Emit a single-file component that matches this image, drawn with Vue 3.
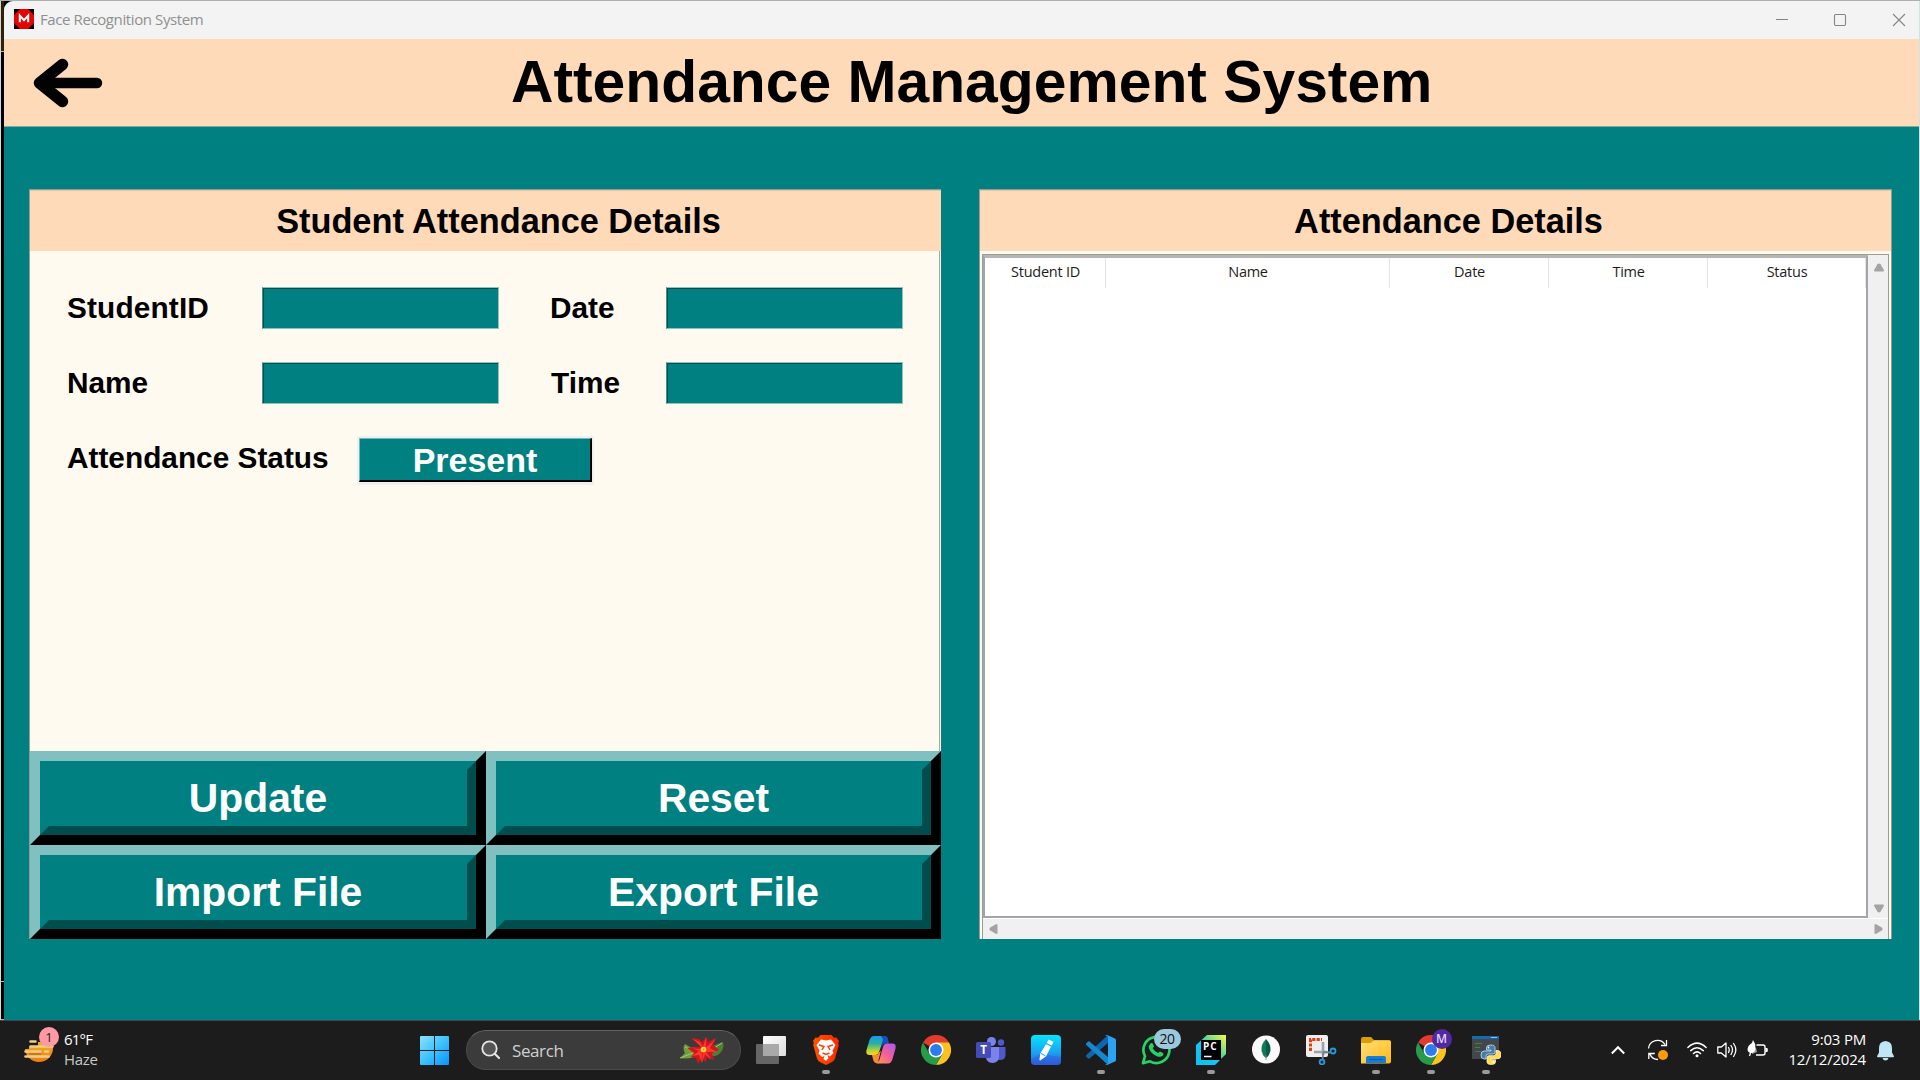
<script setup>
const columns = [
  { label: 'Student ID', width: 121 },
  { label: 'Name', width: 284 },
  { label: 'Date', width: 159 },
  { label: 'Time', width: 159 },
  { label: 'Status', width: 158 },
]
const actions = ['Update', 'Reset', 'Import File', 'Export File']
</script>

<template>
  <div class="screen">
    <div class="desktop">
      <div class="behind"><i class="b1"></i><i class="b2"></i><i class="b3"></i></div>
      <div class="window">
        <div class="titlebar">
          <svg class="app-icon" width="20" height="20" viewBox="0 0 20 20">
            <rect width="20" height="20" fill="#0a0000" />
            <path d="M6 0h8l6 6v8l-6 6H6l-6-6V6z" fill="#e30505" />
            <path d="M5.800 13.300V6.600l4.200 4.600 4.200-4.600v6.700" fill="none" stroke="#fff" stroke-width="2" />
          </svg>
          <span class="title">Face Recognition System</span>
          <svg class="controls" width="130" height="14" viewBox="0 0 130 14" fill="none" stroke="#858585" stroke-width="1.100">
            <path d="M0 6.500h12" />
            <rect x="58.500" y="1.500" width="11" height="11" rx="1.200" />
            <path d="M117 1l12 12M129 1l-12 12" />
          </svg>
        </div>
        <header class="banner">
          <svg class="back" width="72" height="52" viewBox="0 0 72 52" fill="none" stroke="#020202" stroke-linecap="round" stroke-linejoin="round">
            <path d="M30.500 7.500L7.500 26l23 18.500" stroke-width="11.500" />
            <path d="M8 26h57" stroke-width="10.400" />
            <path d="M7 26l14-9v18z" fill="#020202" stroke-width="4" />
          </svg>
          <h1>Attendance Management System</h1>
        </header>
        <main class="content">
          <section class="panel left">
            <h2>Student Attendance Details</h2>
            <div class="form">
              <div class="row">
                <label class="c1 sid">StudentID</label><div class="field"></div>
                <label class="c2">Date</label><div class="field"></div>
              </div>
              <div class="row">
                <label class="c1">Name</label><div class="field"></div>
                <label class="c2 time">Time</label><div class="field"></div>
              </div>
              <div class="row">
                <label class="c3">Attendance Status</label>
                <button class="status"><span>Present</span></button>
              </div>
            </div>
            <div class="actions">
              <button v-for="a in actions" :key="a" class="action"><span>{{ a }}</span></button>
            </div>
          </section>
          <section class="panel right">
            <h2>Attendance Details</h2>
            <div class="table-wrap">
              <div class="table">
                <div class="thead">
                  <div v-for="c in columns" :key="c.label" class="th" :style="{ width: c.width + 'px' }">{{ c.label }}</div>
                </div>
              </div>
              <div class="vscroll">
                <svg width="12" height="9" viewBox="0 0 12 9"><path d="M4.500 1.200Q6-.4 7.500 1.200L11 7.200Q11 8.500 10 8.500H2Q1 8.500 1 7.200z" fill="#a3a3a3" /></svg>
                <svg width="12" height="9" viewBox="0 0 12 9"><path d="M4.500 7.800Q6 9.400 7.500 7.800L11 1.800Q11 .5 10 .5H2Q1 .5 1 1.800z" fill="#a3a3a3" /></svg>
              </div>
              <div class="hscroll">
                <svg width="9" height="12" viewBox="0 0 9 12"><path d="M1.200 4.500Q-.4 6 1.200 7.500L7.200 11Q8.500 11 8.500 10V2Q8.500 1 7.200 1z" fill="#a3a3a3" /></svg>
                <svg width="9" height="12" viewBox="0 0 9 12"><path d="M7.800 4.500Q9.400 6 7.800 7.500L1.800 11Q.5 11 .5 10V2Q.5 1 1.800 1z" fill="#a3a3a3" /></svg>
              </div>
            </div>
          </section>
        </main>
      </div>
      <div class="edge"></div>
    </div>

    <footer class="taskbar">
      <div class="weather">
        <div class="wicon">
          <svg width="32" height="30" viewBox="0 0 32 30">
            <defs><linearGradient id="sun" x1="0" y1="0" x2="0" y2="1"><stop offset="0" stop-color="#fbc02d" /><stop offset="1" stop-color="#ee7a1a" /></linearGradient></defs>
            <circle cx="15" cy="14" r="14" fill="url(#sun)" />
            <path d="M0 0h32v14H29V8H0zM0 8h5v7H0z" fill="#1c1c1c" />
            <path d="M5 8h9v5H5z" fill="#1c1c1c" />
            <path d="M6.500 7.500h5M6.500 12.500h22M1.500 17.500h15M21 17.500h3M1.500 22.500h23" stroke="#ecd081" stroke-width="2.600" stroke-linecap="round" />
            <path d="M5 20h12" stroke="#1c1c1c" stroke-width="1.200" opacity=".3" />
          </svg>
          <span class="alert">1</span>
        </div>
        <div class="wtext"><span>61°F</span><span class="dim">Haze</span></div>
      </div>

      <svg class="start" width="29" height="29" viewBox="0 0 29 29">
        <defs><linearGradient id="win" x1="0" y1="0" x2="1" y2="1"><stop offset="0" stop-color="#8be2ff" /><stop offset=".5" stop-color="#3cc2ff" /><stop offset="1" stop-color="#0a93fa" /></linearGradient></defs>
        <path d="M1 0h13v14H0V1q0-1 1-1zM15 0h13q1 0 1 1v13H15zM0 15h14v14H1q-1 0-1-1zM15 15h14v13q0 1-1 1H15z" fill="url(#win)" />
      </svg>

      <div class="search">
        <svg width="20" height="20" viewBox="0 0 20 20" fill="#555" stroke="#e6e6e6" stroke-linecap="round"><circle cx="8.500" cy="8.500" r="7.200" stroke-width="1.800" /><path d="M14 14l4 4" stroke-width="2.200" /></svg>
        <span>Search</span>
        <svg class="flower" width="46" height="30" viewBox="0 0 46 30">
          <path d="M16 15L6 9Q3 13 6 18L1 23Q12 25 20 19z" fill="#6d9f3e" />
          <path d="M1 23L19 16M6 12l10 5" stroke="#b6d37b" stroke-width=".8" />
          <path d="M28 13L44 7Q46 15 39 20Q33 23 27 18z" fill="#4f7f32" />
          <path d="M29 17L43 8" stroke="#a9c978" stroke-width="1" />
          <path d="M22 12L12 3l8 1 3 3 5-5 1 5 8-4-3 7 6 5-7 3 2 7-7-3-1 5-4-4-4 6-2-6-5-1 3-4-7-5 8-1z" fill="#d3141b" />
          <path d="M24 14L14 4l7 3 3 5 3-10 0 10 9-8-5 9 7 4-10 0 4 8-6-6-3 9-3-8-7 1 7-5-9-4z" fill="#fb372f" />
          <path d="M24 14l-8-8M24 14l10-8M24 14l8 8M24 14l-1 12M24 14l-11-1" stroke="#c90f18" stroke-width=".6" />
          <circle cx="24.500" cy="14.500" r="2.800" fill="#f3d33b" /><circle cx="24.500" cy="14.500" r="1" fill="#a8a326" />
        </svg>
      </div>

      <nav class="apps">
        <div class="app">
          <svg width="30" height="30" viewBox="0 0 30 30">
            <defs><linearGradient id="tv" x1="0" y1="0" x2="1" y2="1"><stop offset="0" stop-color="#fff" /><stop offset="1" stop-color="#dcdcdc" /></linearGradient></defs>
            <rect x="7" y="1" width="23" height="20" rx="1" fill="url(#tv)" />
            <rect x="0" y="9" width="23" height="20" rx="1" fill="#666" />
            <path d="M7 9h16v12H7z" fill="#a9a9a9" />
          </svg>
        </div>
        <div class="app run">
          <svg width="30" height="30" viewBox="0 0 30 30">
            <defs><linearGradient id="br"><stop offset="0" stop-color="#ff5500" /><stop offset="1" stop-color="#ff2500" /></linearGradient></defs>
            <path d="M9.500 0h11l2.500 2.700 2.500-.2 2.500 3.500-.8 2 .6 2L24 23.500q-1 2.500-3 3.500l-6 3-6-3q-2-1-3-3.500L2.200 10l.6-2L2 6l2.500-3.500 2.500.2z" fill="url(#br)" />
            <path d="M10 4.500l5 1 5-1 4.500 5.500-3 5.500 1 2.500-3.500 3.500-2.500-1.500 1 3L15 26l-2.500-2 1-3L11 22l-3.500-3.500 1-3L5.500 10z" fill="#fff" />
            <path d="M8 10l5 1.500-2 3.500M22 10l-5 1.500 2 3.500M11.500 18l3.500 1.500 3.500-1.500" fill="none" stroke="#fb4309" stroke-width="1.500" />
          </svg>
        </div>
        <div class="app">
          <svg width="30" height="30" viewBox="0 0 30 30">
            <defs>
              <linearGradient id="cp1" x1="0" y1="0" x2="0" y2="1"><stop offset="0" stop-color="#189af3" /><stop offset=".4" stop-color="#27b0a0" /><stop offset=".8" stop-color="#c5d628" /><stop offset="1" stop-color="#ffcf20" /></linearGradient>
              <linearGradient id="cp2" x1="1" y1="0" x2="0" y2="1"><stop offset="0" stop-color="#a45cf0" /><stop offset=".5" stop-color="#f45d9c" /><stop offset="1" stop-color="#ff9d45" /></linearGradient>
            </defs>
            <path d="M8 1h13q-2.500 0-3.500 4L13 17q-1 3-4 3H3.500Q-.5 20 .5 15L3.500 5Q5 1 8 1z" fill="url(#cp1)" />
            <path d="M15 1h4q2.500 0 3 3l1 4.500h-3q-3 0-4 3l-1.500 1 2.500-8z" fill="#164fc0" />
            <path d="M22 28.500H10q2.500 0 3.500-4L17 12q1-3.500 4-3.500h5.500q4 0 3 5L26.500 24q-1.500 4.500-4.500 4.500z" fill="url(#cp2)" />
            <path d="M13 28.300h-2q-3 0-4-4L6 20h3.500q2.500 0 3.500-2.500l2-2-2.500 9.500z" fill="#f98a3c" />
          </svg>
        </div>
        <div class="app">
          <svg width="30" height="30" viewBox="0 0 48 48">
            <symbol id="chrome" viewBox="0 0 48 48">
              <path d="M24 24L3.200 12A24 24 0 0 1 44.800 12z" fill="#e33b2e" />
              <path d="M24 12h20.800A24 24 0 0 1 24 48l10.400-18z" fill="#fcc31e" />
              <path d="M13.600 30L3.200 12A24 24 0 0 0 24 48l10.400-18z" fill="#269b48" />
              <circle cx="24" cy="24" r="12" fill="#fff" /><circle cx="24" cy="24" r="9.500" fill="#2b7cf0" />
            </symbol>
            <use href="#chrome" width="48" height="48" />
          </svg>
        </div>
        <div class="app">
          <svg width="30" height="30" viewBox="0 0 30 30">
            <circle cx="25" cy="7.500" r="3.200" fill="#5059c9" /><path d="M20 12h9.500v7.500Q29.500 25 24 25h-4z" fill="#5059c9" />
            <circle cx="15.500" cy="6.500" r="4.500" fill="#7b83eb" /><path d="M10 12h13v9.500q0 6.500-6.500 6.500T10 21.500z" fill="#7b83eb" />
            <rect y="7" width="15" height="16" rx="1.500" fill="#444cb6" />
            <text x="7.500" y="19.300" fill="#fff" text-anchor="middle" font-family="Open Sans, sans-serif" font-weight="700" font-size="11.500">T</text>
          </svg>
        </div>
        <div class="app">
          <svg width="30" height="30" viewBox="0 0 30 30">
            <defs><linearGradient id="pen" x1="0" y1="0" x2="0" y2="1"><stop offset="0" stop-color="#05e4fb" /><stop offset=".6" stop-color="#1aa1f2" /><stop offset="1" stop-color="#3355d8" /></linearGradient></defs>
            <rect width="30" height="30" rx="4" fill="url(#pen)" /><path d="M0 24l10-5 20 3v5q0 3-3 3H4q-4 0-4-4z" fill="#2f5edb" opacity=".45" />
            <path d="M17.500 4.500l5 2.300-1.800 3.600-5-2.300zM15 9.300l5 2.300-4.800 9.600-6 4.300-.8-.4.900-6.600z" fill="#fff" />
            <path d="M10 18.500l4.500 2.300" stroke="#259fec" stroke-width="1" />
          </svg>
        </div>
        <div class="app run">
          <svg width="30" height="30" viewBox="0 0 30 30">
            <path d="M22 0v8L3.500 23.500Q2.500 24 1.500 23L.3 21.800q-.8-1 0-1.800z" fill="#0c66b0" />
            <path d="M22 30v-8L3.500 6.500Q2.500 6 1.500 7L.3 8.200q-.8 1 0 1.800z" fill="#1587ce" />
            <path d="M21 0l8 3.500q1 .5 1 1.500v20q0 1-1 1.500L21 30q-1 0-2-1 2 .5 3-.8V1.800Q21 .5 19 1q1-1 2-1z" fill="#2ba3f3" />
          </svg>
        </div>
        <div class="app">
          <svg width="30" height="30" viewBox="0 0 30 30">
            <path d="M2 28.200l2-7A13 13 0 1 1 9 26.300z" fill="none" stroke="#25d366" stroke-width="2.700" stroke-linejoin="round" />
            <path d="M9.700 8.300q1.500-1 2.300.8l1 2.300-1.300 1.900q2 3.500 5.400 4.800l1.800-1.700 3.100 1.500q1 .8-.2 2.500-2 2.300-5.400 1Q10 19 8 13.500q-.7-3.200 1.700-5.200z" fill="#25d366" />
          </svg>
          <span class="badge count">20</span>
        </div>
        <div class="app run">
          <svg width="30" height="30" viewBox="0 0 30 30">
            <defs><linearGradient id="pc" x1="0" y1="1" x2="1" y2="0"><stop offset="0" stop-color="#07c3f2" /><stop offset=".42" stop-color="#12c6ef" /><stop offset=".62" stop-color="#63d98f" /><stop offset="1" stop-color="#fcf84a" /></linearGradient></defs>
            <path d="M11 0h19v19L19 30H0V10z" fill="url(#pc)" /><rect x="5" y="5" width="20" height="20" fill="#000" />
            <text x="7" y="15" fill="#fff" font-family="Open Sans, sans-serif" font-weight="700" font-size="10" textLength="13.500">PC</text>
            <path d="M8 21.500h7.500" stroke="#fff" stroke-width="1.500" />
          </svg>
        </div>
        <div class="app">
          <svg width="30" height="30" viewBox="0 0 30 30">
            <circle cx="15" cy="14.500" r="14" fill="#fafafa" /><path d="M15 4q5 5.500 4.500 11-.5 5-4.500 8z" fill="#0a5b43" /><path d="M15 4q-5 5.500-4.500 11 .5 5 4.500 8z" fill="#0f7a55" /><path d="M15 20v5" stroke="#888" stroke-width=".8" />
          </svg>
        </div>
        <div class="app">
          <svg width="32" height="30" viewBox="0 0 32 30">
            <rect x="1" width="22" height="22" rx="2" fill="#eeeef1" />
            <path d="M5.500 16V4.500H17" fill="none" stroke="#d8420c" stroke-width="3" stroke-dasharray="3.200 1.200" />
            <path d="M18 7v13M9 17h13" stroke="#9da2aa" stroke-width="2.600" />
            <path d="M18 17l7.500.5M18.500 17l-1 7.500" stroke="#777f89" stroke-width="1.800" />
            <circle cx="28" cy="16" r="2.500" fill="none" stroke="#2499dd" stroke-width="1.800" /><circle cx="17" cy="27" r="2.400" fill="none" stroke="#2499dd" stroke-width="1.800" />
          </svg>
        </div>
        <div class="app run">
          <svg width="30" height="30" viewBox="0 0 30 30">
            <defs><linearGradient id="fo" x1="0" y1="0" x2="1" y2="1"><stop offset="0" stop-color="#ffdf7a" /><stop offset="1" stop-color="#ffb915" /></linearGradient></defs>
            <path d="M0 4q0-2 2-2h8l3 3h15q2 0 2 2v7H0z" fill="#dd9b05" /><path d="M0 8h9q1 0 2-1l2-1.500h15q2 0 2 2v19q0 2-2 2H0z" fill="url(#fo)" />
            <path d="M5 28v-5q0-2 2-2h16q2 0 2 2v5z" fill="#1180dd" /><path d="M8 24.500h14" stroke="#0759a9" stroke-width="1.200" />
          </svg>
        </div>
        <div class="app run">
          <svg width="30" height="30"><use href="#chrome" width="30" height="30" /></svg>
          <span class="badge profile">M</span>
        </div>
        <div class="app run">
          <svg width="30" height="30" viewBox="0 0 30 30">
            <rect x="1" y="1" width="27" height="23" fill="#444749" /><rect x="1" y="1" width="27" height="3" fill="#116bb0" />
            <path d="M4 8.500h7M4 12.500h5M4 16.500h6" stroke="#477e45" stroke-width="1.200" /><path d="M20 2.500h6" stroke="#8ebbe0" />
            <path d="M19.500 10q-4 0-4 2.500v2.500h4.500v1h-7q-3 0-3 4t3 4h2v-3q0-2 2.500-2h4.500q2 0 2-2v-4.500q0-2.500-4.500-2.500z" fill="#3f7db3" stroke="#e8f0f5" stroke-width=".7" />
            <path d="M20.500 29.500q4 0 4-2.500v-2.300H20v-1h7q3 0 3-4t-3-4.200h-2v3q0 2.200-2.500 2.200H18q-2 0-2 2V27q0 2.500 4.500 2.500z" fill="#ffdc4d" stroke="#fff" stroke-width=".7" />
            <circle cx="17.500" cy="12.500" r=".9" fill="#fff" /><circle cx="22.500" cy="27" r=".9" fill="#fff" />
          </svg>
        </div>
      </nav>

      <div class="tray">
        <svg class="chev" width="14" height="10" viewBox="0 0 14 10" fill="none" stroke="#fff" stroke-width="2"><path d="M.8 8.500L7 2.200l6.200 6.300" /></svg>
        <svg class="sync" width="22" height="22" viewBox="0 0 22 22" fill="none" stroke="#fff" stroke-width="1.300">
          <path d="M1.500 9.500A9 9 0 0 1 18 5.500M19.500 1v5.500H14M11 20.500Q5 20.500 3 15M1.800 20v-5.500h6" /><circle cx="16" cy="16" r="5" fill="#ff9b0b" stroke="none" />
        </svg>
        <svg class="wifi" width="20" height="16" viewBox="0 0 20 16" fill="none" stroke="#fff" stroke-width="1.500" stroke-linecap="round">
          <path d="M.9 5.500Q10-3.200 19.100 5.500M3.700 8.600q6.300-5.800 12.600 0M6.500 11.500q3.500-3.200 7 0" /><circle cx="10" cy="13.800" r="1.500" fill="#fff" stroke="none" />
        </svg>
        <svg class="vol" width="21" height="18" viewBox="0 0 21 18" fill="none" stroke="#fff" stroke-width="1.300" stroke-linejoin="round" stroke-linecap="round">
          <path d="M.8 6h3.500L9 2v14l-4.700-4H.8zM11.500 6.500q1.500 2.500 0 5M14 4.500q3 4.500 0 9M16.600 2.500q4.500 6.500 0 13" />
        </svg>
        <svg class="bat" width="21" height="18" viewBox="0 0 21 18" fill="none" stroke="#fff" stroke-width="1.400">
          <path d="M9.500 5H16q2 0 2 2v6q0 2-2 2H9" /><path d="M18.500 8.500h1.700v3h-1.700" fill="#fff" stroke-width="1" />
          <path d="M6 0q3 4 2.500 8-.5 4.500-4 5Q.5 13 .5 9q0-3 3-5Q5.500 3 6 0z" fill="#fff" stroke="none" /><path d="M5.500 7L2.500 16" stroke="#fff" stroke-width="1.300" /><path d="M5 9l4-1 1 4-5 2z" fill="#fff" stroke="none" opacity=".6" />
        </svg>
        <div class="clock"><span>9:03 PM</span><span>12/12/2024</span></div>
        <svg class="bell" width="17" height="20" viewBox="0 0 17 20"><path d="M8.500 0Q15 .5 15 7v4.500l2 3.700q0 1-1 1H1q-1 0-1-1l2-3.700V7Q2 .5 8.500 0zM5.500 17h6q-.7 2.600-3 2.600T5.500 17z" fill="#bfe6f2" /></svg>
      </div>
    </footer>
  </div>
</template>

<style>
body { margin: 0; overflow: hidden; background: #008080; }
</style>

<style scoped>
* { box-sizing: border-box; }
.screen { width: 1920px; height: 1080px; display: flex; flex-direction: column; font-family: "Liberation Sans", Arial, sans-serif; color: #000; overflow: hidden; }
.desktop { height: 1020px; display: flex; border-top: 1px solid #aeaeae; background: #000; }
.behind { width: 4px; height: 1019px; flex: none; display: flex; flex-direction: column; border-left: 1px solid #d8d8d8; background: #000; }
.behind i { display: block; border-bottom: 1px solid #b5b5b5; }
.b1 { height: 51px; background: #30200c; }
.b2 { height: 930px; }
.b3 { height: 38px; }
.window { width: 1915px; display: flex; flex-direction: column; border-radius: 9px 0 0 0; overflow: hidden; background: #008080; }
.edge { width: 1px; background: #c9e6e4; }

.titlebar { height: 38px; flex: none; background: #f3f3f3; display: flex; align-items: center; padding: 0 13px 0 10px; }
.app-icon { margin-top: -2px; }
.title { margin: -2px 0 0 6px; font: 15px/20px "Open Sans", sans-serif; letter-spacing: -0.4px; color: #8f8f8f; flex: 1; }
.controls { flex: none; }

.banner { height: 88px; flex: none; background: #ffdab9; border-bottom: 1px solid #7fad9c; display: flex; align-items: center; padding-left: 28px; }
.back { flex: none; }
h1 { margin: 0 0 0 407px; width: 100%; font-size: 58.800px; line-height: 88px; padding-bottom: 2px; font-weight: 700; white-space: nowrap; }

.content { flex: 1; display: flex; gap: 37px; padding: 62px 0 0 25px; align-items: flex-start; }
.panel { width: 913px; height: 750px; display: flex; flex-direction: column; border: 1px solid #999b91; border-bottom: 0; background: #fffaf0; }
.panel.left { border-right: 0; width: 912px; margin-right: 1px; }
.panel h2 { margin: 0; height: 61px; flex: none; background: #ffdab9; border-top: 1px solid #dcc8b2; text-align: center; font-size: 34.300px; line-height: 60px; font-weight: 700; }
.left h2 { padding-left: 26px; }
.right h2 { padding-left: 26px; }

.form { height: 500px; flex: none; display: flex; flex-direction: column; padding: 36px 0 0 36px; gap: 33px; font-weight: 700; font-size: 29.800px; border-right: 1px solid #a8a69e; margin-right: 1px; }
.row { height: 42px; display: flex; }
.row label { line-height: 42px; white-space: nowrap; padding-left: 1px; }
.row .c1 { width: 196px; }
.row .sid { letter-spacing: 0.150px; }
.row .c2 { width: 167px; padding-left: 51px; }
.row .c2.time { padding-left: 52px; }
.row .c3 { width: 291px; }
.field { width: 237px; height: 42px; flex: none; background: #008080; border: 1px solid #8fc3bd; box-shadow: inset 1px 1px 0 #005152; border-left-color: #4f8c88; }
.status { width: 237px; height: 49px; flex: none; margin-top: -1px; padding: 0; border: 2px solid #f0f0f0; border-bottom-width: 3px; background: none; }
.status span { display: block; height: 44px; border: 2px solid #000; border-width: 1px 2px 2px 1px; border-top-color: #6ebaba; border-left-color: #6ebaba; background: #008080; color: #fff; font: 700 34px/42px "Liberation Sans", sans-serif; }

.actions { display: grid; grid-template-columns: 456px 455px; grid-template-rows: 94px 94px; width: 911px; flex: none; }
.action { padding: 0; background: none; border: 10px solid; border-color: #80c0c0 #000 #000 #80c0c0; }
.action span { display: block; height: 74px; border: 9px solid; border-color: #008080 #004d4d #004d4d #008080; background: #008080; color: #fff; font: 700 40.800px/57px "Liberation Sans", sans-serif; }

.table-wrap { flex: 1; margin: 3px 2px 0 2px; border: 1px solid #9f9b93; border-bottom: 0; background: #f0f0f0; display: grid; grid-template-columns: 885px 1fr; grid-template-rows: 663px 1fr; }
.table { background: #fff; border: 1px solid #8f949b; border-width: 3px 2px 2px 2px; border-color: #b5b5b5 #a2a5aa #a2a5aa #a2a5aa; }
.thead { display: flex; height: 30px; }
.th { flex: none; border-right: 1px solid #e4e4e4; text-align: center; font: 14.500px/28px "Open Sans", sans-serif; letter-spacing: -0.25px; color: #1c1c1c; padding-left: 1px; }
.vscroll { display: flex; flex-direction: column; justify-content: space-between; align-items: center; padding: 8px 0 5px 1px; }
.hscroll { grid-column: 1 / 3; border-top: 1px solid #fff; display: flex; justify-content: space-between; align-items: center; padding: 0 5px 0 6px; }

.taskbar { height: 60px; flex: none; background: #1c1c1c; border-top: 1px solid #454545; display: flex; align-items: flex-start; font-family: "Open Sans", sans-serif; color: #fff; }
.weather { width: 420px; height: 59px; display: flex; padding-left: 24px; flex: none; }
.wicon { position: relative; width: 40px; padding-top: 13px; }
.alert { position: absolute; left: 15px; top: 6px; width: 20px; height: 20px; border-radius: 50%; background: #ff99a4; color: #222; font-size: 13px; line-height: 20px; text-align: center; }
.wtext { display: flex; flex-direction: column; font-size: 15px; line-height: 20px; letter-spacing: -0.8px; padding-top: 8px; }
.dim { color: #c8c8c8; letter-spacing: -0.3px; }
.start { margin-top: 15px; flex: none; }
.search { width: 275px; height: 40px; margin: 9px 0 0 17px; flex: none; border-radius: 20px; background: #3b3b3b; border: 1px solid #4b4b4b; border-top-color: #626262; display: flex; align-items: center; padding: 0 15px 0 14px; }
.search span { margin-left: 11px; padding-top: 2px; font-size: 17px; line-height: 24px; letter-spacing: -0.4px; color: #d0d0d0; flex: 1; }
.apps { display: flex; margin-left: 2.5px; flex: none; }
.app { position: relative; width: 55px; height: 59px; display: flex; justify-content: center; padding-top: 14px; }
.app.run::after { content: ""; position: absolute; left: 23.500px; top: 49px; width: 8px; height: 4px; border-radius: 2px; background: #9a9a9a; }
.badge { position: absolute; top: 8px; height: 20px; border-radius: 10px; text-align: center; line-height: 20px; }
.count { left: 25px; width: 27px; background: #9cc8dd; color: #111; font-size: 14px; letter-spacing: -0.5px; }
.profile { left: 28px; width: 20px; background: #5029a3; color: #e2d4fb; font-size: 12px; font-weight: 600; }
.tray { margin-left: auto; display: flex; align-items: flex-start; padding-right: 26px; }
.tray svg { flex: none; }
.chev { margin-top: 24px; }
.sync { margin: 18px 0 0 22px; }
.wifi { margin: 21px 0 0 18px; }
.vol { margin: 20px 0 0 10px; }
.bat { margin: 19px 0 0 9px; }
.clock { width: 98px; display: flex; flex-direction: column; text-align: right; font-size: 15px; line-height: 20px; letter-spacing: -0.2px; padding-top: 8px; margin-right: 11px; white-space: nowrap; }
.bell { margin-top: 20px; }
</style>
